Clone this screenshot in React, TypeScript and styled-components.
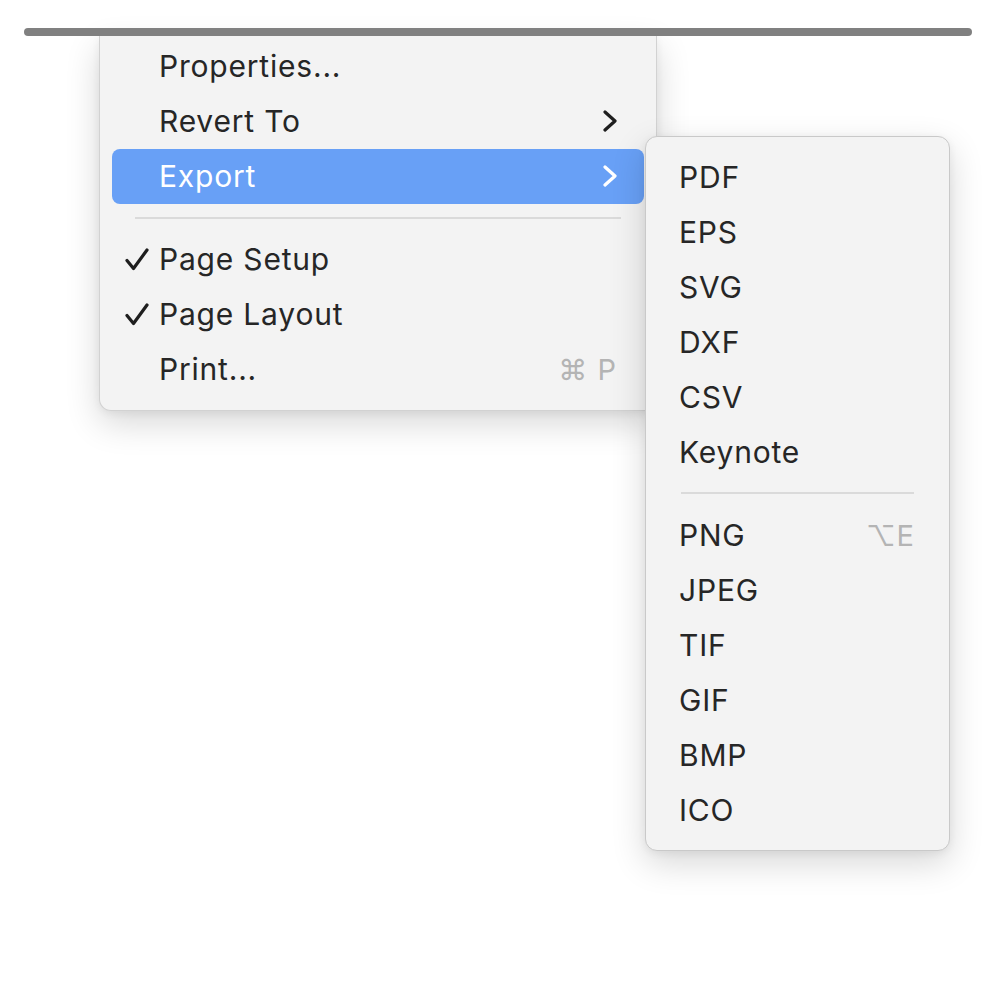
import React from "react";
import styled, { createGlobalStyle } from "styled-components";

const Global = createGlobalStyle`
  html, body { margin: 0; padding: 0; background: #ffffff; }
  body { font-family: Inter, "Noto Sans", "DejaVu Sans", sans-serif; }
`;

const Page = styled.div`
  width: 1000px;
  height: 1000px;
  display: flex;
  flex-direction: column;
  padding-top: 28px;
  box-sizing: border-box;
  overflow: hidden;
`;

const TopBar = styled.div`
  height: 8px;
  margin: 0 28px 0 24px;
  border-radius: 4px;
  background: #808080;
  position: relative;
  z-index: 3;
`;

const MenuArea = styled.div`
  position: relative;
  margin-left: 99px;
  width: 558px;
`;

const Menu = styled.div<{ $sub?: boolean }>`
  background: #f3f3f3;
  box-sizing: border-box;
  display: flex;
  flex-direction: column;
  font-size: 30px;
  color: #262626;
  ${(p) =>
    p.$sub
      ? `
    position: absolute;
    left: 546px;
    top: 100px;
    width: 305px;
    height: 715px;
    padding: 12.5px 0 14.5px;
    border-radius: 12px;
    border: 1px solid #c9c9c9;
    box-shadow: 0 12px 34px rgba(0,0,0,0.16), 0 2px 8px rgba(0,0,0,0.06);
    z-index: 2;
  `
      : `
    width: 558px;
    padding: 2.5px 12px 13.5px;
    border-radius: 0 0 12px 12px;
    border: 1px solid #d2d2d2;
    border-top: none;
    box-shadow: 0 12px 34px rgba(0,0,0,0.16), 0 2px 8px rgba(0,0,0,0.06);
  `}
`;

const Row = styled.div<{ $active?: boolean; $sub?: boolean }>`
  height: 55px;
  flex: none;
  display: flex;
  align-items: center;
  position: relative;
  box-sizing: border-box;
  padding: ${(p) => (p.$sub ? "0 34px 0 33px" : "0 27px 0 47px")};
  border-radius: 8px;
  background: ${(p) => (p.$active ? "#68a0f6" : "transparent")};
  color: ${(p) => (p.$active ? "#ffffff" : "#262626")};
`;

const Label = styled.span`
  flex: 1;
  letter-spacing: 0.8px;
  line-height: 1;
`;

const Shortcut = styled.span`
  color: #b4b4b4;
  letter-spacing: 1px;
  font-size: 29px;
  line-height: 1;
`;

const CheckSlot = styled.span`
  position: absolute;
  left: 13px;
  top: 16px;
  width: 24px;
  height: 23px;
  display: flex;
`;

const Separator = styled.div<{ $sub?: boolean }>`
  flex: none;
  height: 2px;
  margin: ${(p) => (p.$sub ? "12px 35px 14px" : "13px 23px 13px")};
  background: #dadada;
`;

const Chevron = ({ color }: { color: string }) => (
  <svg width="16" height="24" viewBox="0 0 16 24">
    <polyline
      points="4,3 14,12 4,21"
      fill="none"
      stroke={color}
      strokeWidth="3.2"
      strokeLinecap="round"
      strokeLinejoin="round"
    />
  </svg>
);

const Check = () => (
  <svg width="24" height="23" viewBox="0 0 24 23">
    <polyline
      points="2,12.5 8.5,20.5 22,2"
      fill="none"
      stroke="#1e1e1e"
      strokeWidth="3.2"
      strokeLinecap="round"
      strokeLinejoin="round"
    />
  </svg>
);

const subA = ["PDF", "EPS", "SVG", "DXF", "CSV", "Keynote"];
const subB = ["PNG", "JPEG", "TIF", "GIF", "BMP", "ICO"];

export default function App() {
  return (
    <>
      <Global />
      <Page>
        <TopBar />
        <MenuArea>
          <Menu>
            <Row>
              <Label>Properties...</Label>
            </Row>
            <Row>
              <Label>Revert To</Label>
              <Chevron color="#1e1e1e" />
            </Row>
            <Row $active>
              <Label>Export</Label>
              <Chevron color="#ffffff" />
            </Row>
            <Separator />
            <Row>
              <CheckSlot>
                <Check />
              </CheckSlot>
              <Label>Page Setup</Label>
            </Row>
            <Row>
              <CheckSlot>
                <Check />
              </CheckSlot>
              <Label>Page Layout</Label>
            </Row>
            <Row>
              <Label>Print...</Label>
              <Shortcut>⌘ P</Shortcut>
            </Row>
          </Menu>
          <Menu $sub>
            {subA.map((s) => (
              <Row $sub key={s}>
                <Label>{s}</Label>
              </Row>
            ))}
            <Separator $sub />
            {subB.map((s, i) => (
              <Row $sub key={s}>
                <Label>{s}</Label>
                {i === 0 && <Shortcut>⌥E</Shortcut>}
              </Row>
            ))}
          </Menu>
        </MenuArea>
      </Page>
    </>
  );
}
